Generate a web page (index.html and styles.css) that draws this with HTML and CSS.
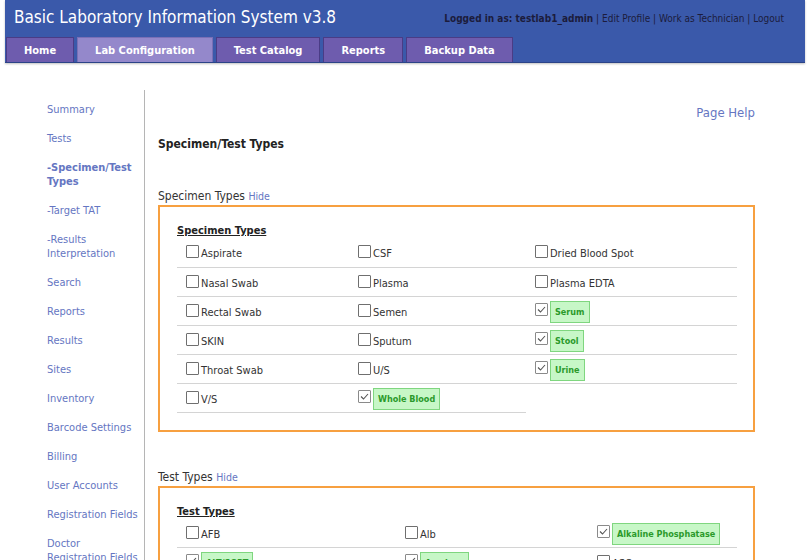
FILE: index.html
```html
<!DOCTYPE html>
<html>
<head>
<meta charset="utf-8">
<link rel="stylesheet" href="styles.css">
</head>
<body>
<div class="header">
  <div class="top-row">
    <div class="app-title">Basic Laboratory Information System v3.8</div>
    <div class="user-links"><b>Logged in as: testlab1_admin</b> | <a>Edit Profile</a> | <a>Work as Technician</a> | <a>Logout</a></div>
  </div>
  <div class="tabs">
    <a class="tab">Home</a>
    <a class="tab active">Lab Configuration</a>
    <a class="tab">Test Catalog</a>
    <a class="tab">Reports</a>
    <a class="tab">Backup Data</a>
  </div>
</div>

<div class="page">
  <div class="sidebar">
    <a class="side-link">Summary</a>
    <a class="side-link">Tests</a>
    <a class="side-link current">-Specimen/Test Types</a>
    <a class="side-link">-Target TAT</a>
    <a class="side-link">-Results Interpretation</a>
    <a class="side-link">Search</a>
    <a class="side-link">Reports</a>
    <a class="side-link">Results</a>
    <a class="side-link">Sites</a>
    <a class="side-link">Inventory</a>
    <a class="side-link">Barcode Settings</a>
    <a class="side-link">Billing</a>
    <a class="side-link">User Accounts</a>
    <a class="side-link">Registration Fields</a>
    <a class="side-link">Doctor Registration Fields</a>
  </div>

  <div class="main">
    <div class="help-row"><a class="page-help">Page Help</a></div>
    <div class="page-title">Specimen/Test Types</div>

    <div class="section-label">Specimen Types <a class="hide-link">Hide</a></div>
    <div class="box">
      <div class="box-title">Specimen Types</div>
      <table class="types spec">
        <tr>
          <td><div class="item"><span class="cb"></span><span class="txt">Aspirate</span></div></td>
          <td><div class="item"><span class="cb"></span><span class="txt">CSF</span></div></td>
          <td><div class="item"><span class="cb"></span><span class="txt">Dried Blood Spot</span></div></td>
        </tr>
        <tr>
          <td><div class="item"><span class="cb"></span><span class="txt">Nasal Swab</span></div></td>
          <td><div class="item"><span class="cb"></span><span class="txt">Plasma</span></div></td>
          <td><div class="item"><span class="cb"></span><span class="txt">Plasma EDTA</span></div></td>
        </tr>
        <tr>
          <td><div class="item"><span class="cb"></span><span class="txt">Rectal Swab</span></div></td>
          <td><div class="item"><span class="cb"></span><span class="txt">Semen</span></div></td>
          <td><div class="item on"><span class="cb"><svg viewBox="0 0 11 11"><path d="M2 5.5 L4.5 8 L9 3" /></svg></span><span class="sel">Serum</span></div></td>
        </tr>
        <tr>
          <td><div class="item"><span class="cb"></span><span class="txt">SKIN</span></div></td>
          <td><div class="item"><span class="cb"></span><span class="txt">Sputum</span></div></td>
          <td><div class="item on"><span class="cb"><svg viewBox="0 0 11 11"><path d="M2 5.5 L4.5 8 L9 3" /></svg></span><span class="sel">Stool</span></div></td>
        </tr>
        <tr>
          <td><div class="item"><span class="cb"></span><span class="txt">Throat Swab</span></div></td>
          <td><div class="item"><span class="cb"></span><span class="txt">U/S</span></div></td>
          <td><div class="item on"><span class="cb"><svg viewBox="0 0 11 11"><path d="M2 5.5 L4.5 8 L9 3" /></svg></span><span class="sel">Urine</span></div></td>
        </tr>
        <tr>
          <td><div class="item"><span class="cb"></span><span class="txt">V/S</span></div></td>
          <td><div class="item on"><span class="cb"><svg viewBox="0 0 11 11"><path d="M2 5.5 L4.5 8 L9 3" /></svg></span><span class="sel">Whole Blood</span></div></td>
        </tr>
      </table>
    </div>

    <div class="section-label second">Test Types <a class="hide-link">Hide</a></div>
    <div class="box">
      <div class="box-title">Test Types</div>
      <table class="types tests">
        <tr>
          <td><div class="item"><span class="cb"></span><span class="txt">AFB</span></div></td>
          <td><div class="item"><span class="cb"></span><span class="txt">Alb</span></div></td>
          <td><div class="item on"><span class="cb"><svg viewBox="0 0 11 11"><path d="M2 5.5 L4.5 8 L9 3" /></svg></span><span class="sel">Alkaline Phosphatase</span></div></td>
        </tr>
        <tr>
          <td><div class="item on"><span class="cb"><svg viewBox="0 0 11 11"><path d="M2 5.5 L4.5 8 L9 3" /></svg></span><span class="sel">ALT/SGPT</span></div></td>
          <td><div class="item on"><span class="cb"><svg viewBox="0 0 11 11"><path d="M2 5.5 L4.5 8 L9 3" /></svg></span><span class="sel">Amylase</span></div></td>
          <td><div class="item"><span class="cb"></span><span class="txt">ASO</span></div></td>
        </tr>
      </table>
    </div>
  </div>
</div>
</body>
</html>
```
FILE: styles.css
```css
* { box-sizing: border-box; }
html, body { margin: 0; padding: 0; background: #fff; }
body {
  font-family: "DejaVu Sans Condensed", "DejaVu Sans", sans-serif;
  font-size: 11px;
  color: #333;
  overflow: hidden;
  height: 560px;
}
a { cursor: pointer; }

.header {
  margin: 0 5px;
  width: 800px;
  height: 63px;
  background: #3a59aa;
  border-bottom: 1px solid #2c4488;
  box-shadow: 0 1px 2px rgba(0,0,0,0.25);
  display: flex;
  flex-direction: column;
  justify-content: space-between;
}
.top-row {
  display: flex;
  justify-content: space-between;
  align-items: center;
  padding: 7px 21px 0 9px;
}
.app-title {
  color: #fff;
  font-size: 17px;
}
.user-links {
  color: #1c1c3c;
  font-size: 10px;
  padding-top: 2px;
}
.user-links b { font-weight: bold; }
.user-links a { color: #1c1c3c; }

.tabs {
  display: flex;
  gap: 3px;
  padding-left: 1px;
}
.tab {
  height: 25px;
  padding: 0 17px;
  display: flex;
  align-items: center;
  background: #6e5cae;
  border: 1px solid #4a3c86;
  border-bottom: none;
  color: #fff;
  font-weight: bold;
  font-size: 11px;
}
.tab.active {
  background: #9488cb;
  border-color: #7a6fb6;
}

.page {
  display: flex;
  margin-top: 27px;
}
.sidebar {
  width: 145px;
  flex: none;
  border-right: 1px solid #b5b5b5;
  padding: 13px 0 0 47px;
  display: flex;
  flex-direction: column;
  gap: 15px;
  min-height: 480px;
}
.side-link {
  color: #6576c2;
  font-size: 11px;
  line-height: 14px;
  padding-right: 4px;
}
.side-link.current { font-weight: bold; }

.main {
  flex: 1;
  padding: 0 55px 0 13px;
}
.help-row {
  display: flex;
  justify-content: flex-end;
  padding-top: 15px;
}
.page-help {
  color: #6576c2;
  font-size: 13px;
  line-height: 16px;
}
.page-title {
  font-weight: bold;
  font-size: 12px;
  color: #222;
  margin-top: 15px;
  line-height: 16px;
}
.section-label {
  margin-top: 36px;
  font-size: 12px;
  color: #333;
  line-height: 16px;
}
.section-label.second { margin-top: 37px; }
.hide-link {
  color: #6576c2;
  font-size: 10.5px;
}
.box {
  margin-top: 1px;
  border: 2px solid #f7a040;
  padding: 16px 16px 17px 17px;
}
.box-title {
  font-weight: bold;
  text-decoration: underline;
  font-size: 11px;
  color: #222;
  line-height: 15px;
}
.types {
  border-collapse: collapse;
}
.types td {
  height: 29px;
  padding: 4px 0 0 9px;
  border-bottom: 1px solid #d4d4d4;
  vertical-align: top;
  white-space: nowrap;
  color: #333;
  font-size: 11px;
}
.spec td:nth-child(1) { width: 172px; }
.spec td:nth-child(2) { width: 177px; }
.spec td:nth-child(3) { width: 211px; }
.tests td:nth-child(1) { width: 219px; }
.tests td:nth-child(2) { width: 192px; }
.tests td:nth-child(3) { width: 149px; }

.item {
  display: flex;
  align-items: flex-start;
  gap: 2px;
}
.txt { line-height: 14px; padding-top: 5px; }
.cb {
  flex: none;
  display: block;
  width: 13px;
  height: 13px;
  margin-top: 3px;
  border: 1px solid #6f6f6f;
  background: #fff;
  border-radius: 1px;
}
.item.on .cb { margin-top: 2px; border-color: #8a8a8a; }
.cb svg { display: block; width: 11px; height: 11px; }
.cb svg path { fill: none; stroke: #555; stroke-width: 1.1; }
.sel {
  display: block;
  background: #c7f7c7;
  border: 1px solid #7fd67f;
  color: #2b9a2b;
  font-weight: bold;
  font-size: 9px;
  line-height: 20px;
  padding: 0 4px;
}
```
